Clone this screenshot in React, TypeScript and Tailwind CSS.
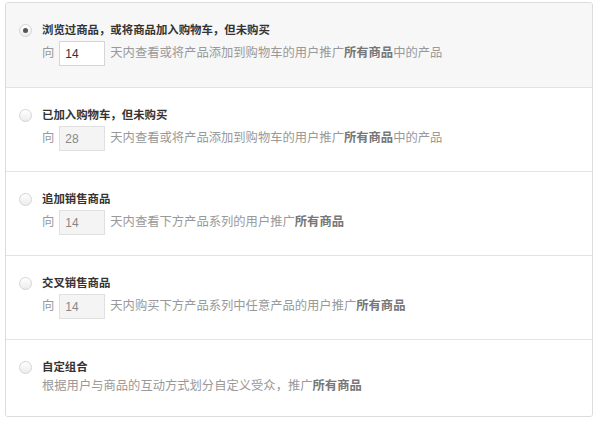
import React, { useState } from 'react';

type Option = {
  id: string;
  title: string;
  days?: number;
  before?: string;
  after?: string;
};

const options: Option[] = [
  { id: 'viewed', title: '浏览过商品，或将商品加入购物车，但未购买', days: 14, before: '天内查看或将产品添加到购物车的用户推广', after: '中的产品' },
  { id: 'cart', title: '已加入购物车，但未购买', days: 28, before: '天内查看或将产品添加到购物车的用户推广', after: '中的产品' },
  { id: 'upsell', title: '追加销售商品', days: 14, before: '天内查看下方产品系列的用户推广', after: '' },
  { id: 'cross', title: '交叉销售商品', days: 14, before: '天内购买下方产品系列中任意产品的用户推广', after: '' },
  { id: 'custom', title: '自定组合', before: '根据用户与商品的互动方式划分自定义受众，推广', after: '' },
];

const font = { fontFamily: '"Liberation Sans", "Noto Sans CJK SC", sans-serif' };

function Radio({ checked }: { checked: boolean }) {
  return (
    <span className="w-[13px] h-[13px] rounded-full border border-[#d4d4d4] bg-gradient-to-b from-white to-[#ececec] flex items-center justify-center shrink-0">
      {checked && <span className="w-[5px] h-[5px] rounded-full bg-[#555]" />}
    </span>
  );
}

export default function App() {
  const [selected, setSelected] = useState('viewed');

  return (
    <div className="w-[600px] h-[422px] bg-white pt-[2px] pl-[5px]" style={font}>
      <div className="w-[588px] border border-[#dcdcdc] rounded-[3px] overflow-hidden">
        {options.map((opt, i) => {
          const active = selected === opt.id;
          return (
            <div
              key={opt.id}
              onClick={() => setSelected(opt.id)}
              className={`flex cursor-pointer pl-[13px] pt-[19px] ${i > 0 ? 'border-t border-[#e3e3e3]' : ''} ${active ? 'bg-[#f7f7f7]' : 'bg-white'} ${opt.days ? 'h-[84px]' : 'h-[77px]'}`}
            >
              <div className="pt-[2px] pr-[10px]">
                <Radio checked={active} />
              </div>
              <div className="flex flex-col">
                <div className="text-[11.4px] leading-[16px] font-semibold text-[#333]">{opt.title}</div>
                {opt.days ? (
                  <div className="flex items-center gap-[5px] mt-[3px] text-[12.3px] text-[#999]">
                    <span>向</span>
                    <input
                      defaultValue={opt.days}
                      disabled={!active}
                      className={`w-[46px] h-[25px] border px-[5px] text-[12px] outline-none ${active ? 'bg-white border-[#d6d6d6] text-[#333]' : 'bg-[#f4f4f4] border-[#e0e0e0] text-[#888]'}`}
                    />
                    <span>
                      {opt.before}
                      <b className="font-semibold text-[#777]">所有商品</b>
                      {opt.after}
                    </span>
                  </div>
                ) : (
                  <div className="mt-[2px] text-[12.3px] leading-[18px] text-[#999]">
                    {opt.before}
                    <b className="font-semibold text-[#777]">所有商品</b>
                  </div>
                )}
              </div>
            </div>
          );
        })}
      </div>
    </div>
  );
}
